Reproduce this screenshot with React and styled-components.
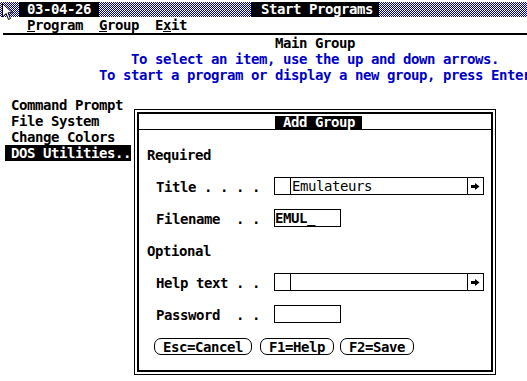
import React from 'react';
import styled, { createGlobalStyle } from 'styled-components';

const GlobalStyle = createGlobalStyle`
  html, body {
    margin: 0;
    padding: 0;
    background: #ffffff;
  }
  body {
    font-family: "DejaVu Sans Mono", "Liberation Mono", monospace;
    font-weight: bold;
    font-size: 14px;
    letter-spacing: -0.43px;
    color: #000;
  }
`;

const Screen = styled.div`
  position: relative;
  width: 527px;
  height: 381px;
  overflow: hidden;
  background: #fff;
  line-height: 17px;
  white-space: pre;
`;

// top title strip with the dithered blue pattern
const TitleBar = styled.div`
  display: flex;
  align-items: center;
  height: 15px;
  margin-top: 2px;
  background: repeating-conic-gradient(#0000a8 0% 25%, #ffffff 0% 50%) 0 0 / 2px 2px;
`;

const BarLabel = styled.div`
  height: 15px;
  line-height: 15px;
  background: #000;
  color: #fff;
  margin-left: ${p => p.$left}px;
  padding: ${p => p.$pad};
`;

const MenuBar = styled.div`
  display: flex;
  gap: 16px;
  height: 16px;
  padding-left: 24px;
  margin-left: 3px;
  border-bottom: 2px solid #000;
  line-height: 17px;
`;

const MenuItem = styled.span`
  display: inline-block;
  height: 16px;
`;

const Hot = styled.span`
  display: inline-block;
  height: 14px;
  border-bottom: 1px solid #000;
`;

const GroupTitle = styled.div`
  height: 16px;
  padding-left: 275px;
`;

const Hint = styled.div`
  height: 16px;
  color: #0000c8;
  padding-left: ${p => p.$left}px;
`;

const ProgramList = styled.div`
  margin-top: 14px;
  padding-left: 5px;
`;

const ProgramItem = styled.div`
  width: fit-content;
  height: 16px;
  padding: 0 0 0 6px;
  background: ${p => (p.$active ? '#000' : 'transparent')};
  color: ${p => (p.$active ? '#fff' : '#000')};
`;

// dialog window floating over the program list
const Dialog = styled.div`
  position: absolute;
  left: 134px;
  top: 109px;
  width: 362px;
  height: 266px;
  box-sizing: border-box;
  border: 1px solid #000;
  padding: 2px;
  background: #fff;
`;

const DialogInner = styled.div`
  height: 100%;
  box-sizing: border-box;
  border: 2px solid #000;
  display: flex;
  flex-direction: column;
`;

const DialogHeader = styled.div`
  display: flex;
  align-items: flex-end;
  height: 16px;
  box-sizing: border-box;
  border-bottom: 1px solid #000;
`;

const DialogTitle = styled.div`
  margin-left: 136px;
  width: 87px;
  box-sizing: border-box;
  padding-left: 8px;
  height: 13px;
  line-height: 13px;
  background: #000;
  color: #fff;
`;

const DialogBody = styled.div`
  padding-top: 8px;
  display: flex;
  flex-direction: column;
`;

const Row = styled.div`
  display: flex;
  align-items: center;
  height: 32px;
`;

const Section = styled.div`
  padding-left: 8px;
  padding-top: 2px;
`;

const FieldLabel = styled.div`
  margin-left: 17px;
  width: 118px;
  padding-top: 2px;
`;

const InputBox = styled.div`
  display: flex;
  width: ${p => p.$width}px;
  height: 18px;
  box-sizing: border-box;
  border: 1px solid #000;
  line-height: 17px;
`;

const LeftCell = styled.div`
  width: 16px;
  box-sizing: border-box;
  border-right: 1px solid #000;
`;

const InputText = styled.div`
  flex: 1;
  padding-left: ${p => p.$pad || 0}px;
  font-weight: ${p => (p.$light ? 'normal' : 'bold')};
`;

const ArrowCell = styled.div`
  width: 16px;
  box-sizing: border-box;
  border-left: 1px solid #000;
  display: flex;
  align-items: center;
  justify-content: center;
`;

const ButtonRow = styled.div`
  display: flex;
  align-items: center;
  height: 32px;
  padding-left: 15px;
`;

const KeyButton = styled.div`
  height: 17px;
  box-sizing: border-box;
  border: 1px solid #000;
  border-radius: 7px;
  padding: 0 8px;
  line-height: 16px;
  margin-right: ${p => p.$gap}px;
`;

const Pointer = styled.svg`
  position: absolute;
  left: 2px;
  top: 3px;
`;

const RightArrow = () => (
  <svg width="9" height="7" viewBox="0 0 9 7">
    <rect x="0" y="2" width="5" height="3" fill="#000" />
    <polygon points="4,0 8.5,3.5 4,7" fill="#000" />
  </svg>
);

const ComboInput = ({ value }) => (
  <InputBox $width={210}>
    <LeftCell />
    <InputText $pad={1} $light>{value}</InputText>
    <ArrowCell>
      <RightArrow />
    </ArrowCell>
  </InputBox>
);

export default function App() {
  return (
    <>
      <GlobalStyle />
      <Screen>
        <TitleBar>
          <BarLabel $left={19} $pad="0 8px">03-04-26</BarLabel>
          <BarLabel $left={152} $pad="0 6px 0 10px">Start Programs</BarLabel>
        </TitleBar>
        <MenuBar>
          <MenuItem><Hot>P</Hot>rogram</MenuItem>
          <MenuItem><Hot>G</Hot>roup</MenuItem>
          <MenuItem>E<Hot>x</Hot>it</MenuItem>
        </MenuBar>
        <GroupTitle>Main Group</GroupTitle>
        <Hint $left={131}>To select an item, use the up and down arrows.</Hint>
        <Hint $left={99}>To start a program or display a new group, press Enter</Hint>

        <ProgramList>
          <ProgramItem>Command Prompt</ProgramItem>
          <ProgramItem>File System</ProgramItem>
          <ProgramItem>Change Colors</ProgramItem>
          <ProgramItem $active>DOS Utilities..</ProgramItem>
        </ProgramList>

        <Dialog>
          <DialogInner>
            <DialogHeader>
              <DialogTitle>Add Group</DialogTitle>
            </DialogHeader>
            <DialogBody>
              <Row><Section>Required</Section></Row>
              <Row>
                <FieldLabel>Title . . . .</FieldLabel>
                <ComboInput value="Emulateurs" />
              </Row>
              <Row>
                <FieldLabel>Filename  . .</FieldLabel>
                <InputBox $width={67}>
                  <InputText>EMUL_</InputText>
                </InputBox>
              </Row>
              <Row><Section>Optional</Section></Row>
              <Row>
                <FieldLabel>Help text . .</FieldLabel>
                <ComboInput value="" />
              </Row>
              <Row>
                <FieldLabel>Password  . .</FieldLabel>
                <InputBox $width={67} />
              </Row>
              <ButtonRow>
                <KeyButton $gap={8}>Esc=Cancel</KeyButton>
                <KeyButton $gap={6}>F1=Help</KeyButton>
                <KeyButton $gap={0}>F2=Save</KeyButton>
              </ButtonRow>
            </DialogBody>
          </DialogInner>
        </Dialog>

        <Pointer width="12" height="18" viewBox="0 0 12 18">
          <polygon points="0.5,0.5 0.5,14 4,10.5 6.5,16.5 8.5,15.5 6,9.8 10.5,9.8" fill="#fff" stroke="#000" strokeWidth="1" />
        </Pointer>
      </Screen>
    </>
  );
}
